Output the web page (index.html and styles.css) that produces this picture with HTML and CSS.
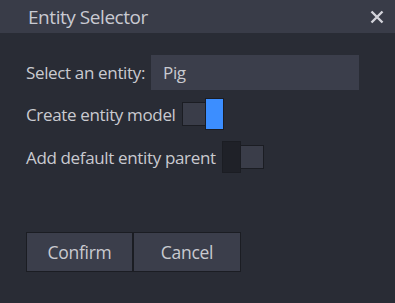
FILE: index.html
```html
<!DOCTYPE html>
<html lang="en">
<head>
    <meta charset="UTF-8">
    <meta name="viewport" content="width=device-width, initial-scale=1.0">
    <title>Entity Selector</title>
    <link rel="stylesheet" href="styles.css">
</head>
<body>
    <div class="dialog">
        <div class="header">
            <span class="title">Entity Selector</span>
            <svg class="close" width="14" height="14" viewBox="0 0 14 14">
                <path d="M1.5 1.5 L12.5 12.5 M12.5 1.5 L1.5 12.5" stroke="#d2d3da" stroke-width="2.4" stroke-linecap="butt"/>
            </svg>
        </div>

        <div class="content">
            <div class="row">
                <span class="label">Select an entity:</span>
                <div class="input">Pig</div>
            </div>

            <div class="row row-toggle">
                <span class="label">Create entity model</span>
                <div class="toggle on"><div class="knob"></div></div>
            </div>

            <div class="row row-toggle second">
                <span class="label">Add default entity parent</span>
                <div class="toggle"><div class="knob"></div></div>
            </div>

            <div class="buttons">
                <button class="btn">Confirm</button>
                <button class="btn">Cancel</button>
            </div>
        </div>
    </div>
</body>
</html>
```

FILE: styles.css
```css
body {
    margin: 0;
    background-color: #292c35;
    font-family: "Open Sans", "Noto Sans", sans-serif;
    color: #c9cad0;
}
.dialog {
    width: 395px;
    height: 303px;
    background-color: #292c35;
}
.header {
    height: 33px;
    background-color: #393c48;
    display: flex;
    align-items: center;
    justify-content: space-between;
    padding: 0 11px 0 28px;
}
.title {
    font-size: 19px;
    letter-spacing: -0.45px;
    color: #c9cad2;
}
.close {
    display: block;
}
.content {
    padding: 22px 0 0 26px;
}
.row {
    display: flex;
    align-items: center;
}
.label {
    font-size: 17px;
    letter-spacing: -0.35px;
    white-space: nowrap;
}
.input {
    margin-left: 6px;
    width: 196px;
    height: 35px;
    padding-left: 12px;
    background-color: #3b3e4b;
    display: flex;
    align-items: center;
    font-size: 17px;
    letter-spacing: -0.35px;
}
.row-toggle {
    margin-top: 12px;
}
.row-toggle.second {
    margin-top: 19px;
}
.toggle {
    position: relative;
    margin-left: 6px;
    width: 40px;
    height: 22px;
    background-color: #3a3d49;
    border: 1px solid #1b1d23;
}
.knob {
    position: absolute;
    top: -5px;
    left: -1px;
    width: 17px;
    height: 30px;
    background-color: #1f2128;
    border: 1px solid #1b1d23;
}
.toggle.on .knob {
    left: auto;
    right: -1px;
    background-color: #3c8eff;
}
.buttons {
    display: flex;
    margin-top: 63px;
}
.btn {
    width: 107px;
    height: 40px;
    background-color: #3b3e4b;
    border: 1px solid #1b1d23;
    color: #c9cad0;
    font-family: "Open Sans", "Noto Sans", sans-serif;
    font-size: 17.5px;
    letter-spacing: -0.3px;
    padding: 0;
}
.btn + .btn {
    width: 108px;
}
```
